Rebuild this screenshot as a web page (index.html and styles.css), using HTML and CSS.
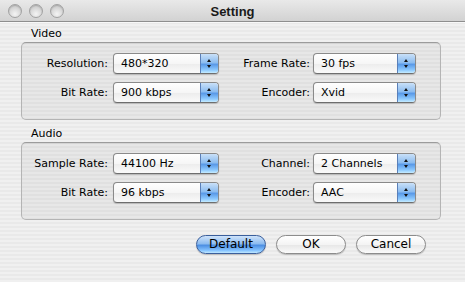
FILE: index.html
```html
<!DOCTYPE html>
<html lang="en">
<head>
  <meta charset="UTF-8">
  <title>Setting</title>
  <link rel="stylesheet" href="styles.css">
</head>
<body>
<div class="window">
  <!--标题栏-->
  <div class="titlebar">
    <div class="lights"><span></span><span></span><span></span></div>
    <div class="title">Setting</div>
    <div></div>
  </div>

  <div class="content">
    <!--视频-->
    <div class="group-title">Video</div>
    <div class="group-box">
      <label>Resolution:</label>
      <div class="popup"><span class="value">480*320</span><span class="arrows"></span></div>
      <label>Frame Rate:</label>
      <div class="popup"><span class="value">30 fps</span><span class="arrows"></span></div>
      <label>Bit Rate:</label>
      <div class="popup"><span class="value">900 kbps</span><span class="arrows"></span></div>
      <label>Encoder:</label>
      <div class="popup"><span class="value">Xvid</span><span class="arrows"></span></div>
    </div>

    <!--音频-->
    <div class="group-title">Audio</div>
    <div class="group-box">
      <label>Sample Rate:</label>
      <div class="popup"><span class="value">44100 Hz</span><span class="arrows"></span></div>
      <label>Channel:</label>
      <div class="popup"><span class="value">2 Channels Stereo</span><span class="arrows"></span></div>
      <label>Bit Rate:</label>
      <div class="popup"><span class="value">96 kbps</span><span class="arrows"></span></div>
      <label>Encoder:</label>
      <div class="popup"><span class="value">AAC</span><span class="arrows"></span></div>
    </div>

    <!--按钮-->
    <div class="buttons">
      <a href="javascript:;" class="btn default">Default</a>
      <a href="javascript:;" class="btn">OK</a>
      <a href="javascript:;" class="btn">Cancel</a>
    </div>
  </div>
</div>
</body>
</html>
```

FILE: styles.css
```css
* {
  margin: 0;
  padding: 0;
  box-sizing: border-box;
}

body {
  font-family: "DejaVu Sans", sans-serif;
  font-size: 11px;
  color: #000;
}

.window {
  width: 465px;
  height: 282px;
  overflow: hidden;
  background: repeating-linear-gradient(to bottom, #f0f0f0 0, #f0f0f0 2px, #e9e9e9 2px, #e9e9e9 4px);
}

.titlebar {
  height: 22px;
  display: grid;
  grid-template-columns: 1fr auto 1fr;
  align-items: center;
  background: linear-gradient(to bottom, #e9e9e9, #d2d2d2);
  border-bottom: 1px solid #8e8e8e;
  box-shadow: 0 1px 0 #f8f8f8;
}

.lights {
  display: flex;
  gap: 7px;
  padding-left: 8px;
}

.lights span {
  width: 14px;
  height: 14px;
  border-radius: 50%;
  border: 1px solid #a2a2a2;
  background: radial-gradient(circle at 50% 75%, #f4f4f4 0, #dcdcdc 45%, #bdbdbd 100%);
  box-shadow: inset 0 1px 1px rgba(0, 0, 0, .15);
}

.title {
  font-family: "Liberation Sans", sans-serif;
  font-weight: bold;
  font-size: 13px;
  color: #1a1a1a;
  padding-top: 1px;
}

.content {
  padding: 5px 24px 0 21px;
}

.group-title {
  height: 14px;
  line-height: 14px;
  padding-left: 10px;
  margin-bottom: 1px;
}

.group-box + .group-title {
  margin-top: 7px;
}

.group-box {
  height: 78px;
  border: 1px solid #b4b4b4;
  border-top-color: #9c9c9c;
  border-radius: 5px;
  background: rgba(0, 0, 0, .035);
  box-shadow: inset 0 1px 1px rgba(0, 0, 0, .06);
  padding-top: 10px;
  display: grid;
  grid-template-columns: 91px 106px 94px 103px;
  grid-auto-rows: 21px;
  row-gap: 8px;
  align-items: center;
}

.group-box label {
  text-align: right;
  padding-right: 5px;
  white-space: nowrap;
}

.group-box label:nth-of-type(2n) {
  padding-right: 3px;
}

.popup {
  height: 21px;
  display: flex;
  border: 1px solid #8a8a8a;
  border-bottom-color: #6e6e6e;
  border-radius: 4px;
  overflow: hidden;
  background: linear-gradient(to bottom, #ffffff 0, #f6f6f6 50%, #ececec 51%, #fafafa 100%);
  box-shadow: 0 1px 1px rgba(0, 0, 0, .18);
}

.popup .value {
  flex: 1;
  min-width: 0;
  line-height: 19px;
  margin-right: 11px;
  padding-left: 7px;
  white-space: nowrap;
  overflow: hidden;
}

.popup .arrows {
  width: 18px;
  border-left: 1px solid #5a7fb8;
  background: linear-gradient(to bottom, #c9e0f8 0, #8dbdf0 45%, #5a9ae8 55%, #8fcbff 85%, #c6ecff 100%);
  position: relative;
}

/*上下箭头*/
.popup .arrows::before,
.popup .arrows::after {
  content: "";
  position: absolute;
  left: 6px;
  border-left: 2.5px solid transparent;
  border-right: 2.5px solid transparent;
}

.popup .arrows::before {
  top: 5px;
  border-bottom: 3px solid #111;
}

.popup .arrows::after {
  top: 11px;
  border-top: 3px solid #111;
}

.buttons {
  display: flex;
  justify-content: flex-end;
  gap: 10px;
  margin-top: 15px;
  padding-right: 15px;
}

.btn {
  width: 70px;
  height: 19px;
  line-height: 17px;
  font-size: 12px;
  text-align: center;
  color: #000;
  text-decoration: none;
  border: 1px solid #8c8c8c;
  border-radius: 10px;
  background: linear-gradient(to bottom, #ffffff 0, #f4f4f4 50%, #e6e6e6 51%, #fbfbfb 100%);
  box-shadow: 0 1px 1px rgba(0, 0, 0, .2);
}

.btn.default {
  border-color: #3b5f9c;
  background: linear-gradient(to bottom, #cfe3fa 0, #8ebcf0 45%, #4d8fe3 55%, #86c4ff 85%, #c0e8ff 100%);
}
```
